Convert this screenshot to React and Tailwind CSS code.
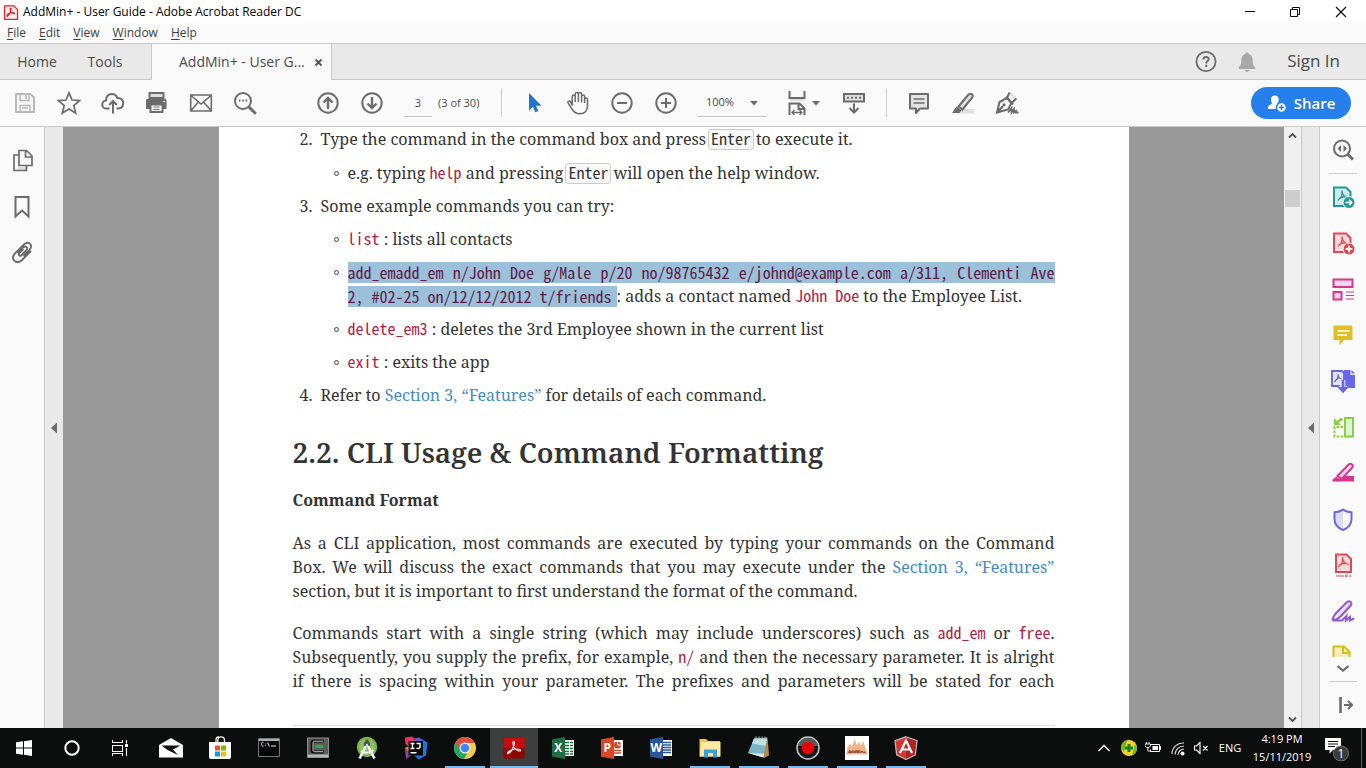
import React from "react";

const ui = "font-['Open_Sans','Noto_Sans',sans-serif]";

function Svg({ s = 28, className = "", children, ...rest }) {
  return (
    <svg width={s} height={s} viewBox={`0 0 ${s} ${s}`} fill="none" aria-hidden="true" className={`shrink-0 ${className}`} {...rest}>
      {children}
    </svg>
  );
}

function ToolButton({ label, children }) {
  return (
    <button type="button" aria-label={label} className="flex h-11 w-11 shrink-0 items-center justify-center text-[#6b6b6b]">
      {children}
    </button>
  );
}

const line = { stroke: "currentColor", strokeWidth: 2 };

/* ---------- window chrome ---------- */

function TitleBar() {
  return (
    <header className={`flex h-[23px] shrink-0 items-center bg-white text-xs text-black ${ui}`}>
      <Svg s={16} className="ml-[3px]">
        <path d="M1.5 1.800h9.200l3.800 3.600v10.100h-13z" fill="#fdecec" stroke="#e02424" strokeWidth="1.300" strokeLinejoin="round" />
        <path d="M4 11.500c.5-1.600 3.500-3.200 6.500-2.800 1.800.3 1.400 1.500-.2.900C8 8.600 7 6.500 7.200 4.800c.2-1 1.200-.6.9.5C7.700 8 6 11 4.600 12.200c-.6.4-.8 0-.6-.7z" stroke="#e02424" strokeWidth="1.100" />
      </Svg>
      <h1 className="ml-1 truncate">AddMin+ - User Guide - Adobe Acrobat Reader DC</h1>
      <div className="mr-[2px] ml-auto flex">
        <button type="button" aria-label="Minimize" className="flex h-[22px] w-[46px] items-center justify-center">
          <Svg s={12}><path d="M2 5.500h10" stroke="#000" /></Svg>
        </button>
        <button type="button" aria-label="Restore" className="flex h-[22px] w-[46px] items-center justify-center">
          <Svg s={12}><path d="M1.500 3.500h7v7h-7zM3.500 3.500v-2h7v7h-2" stroke="#000" /></Svg>
        </button>
        <button type="button" aria-label="Close" className="flex h-[22px] w-[46px] items-center justify-center">
          <Svg s={12}><path d="M1 1l10 10M11 1L1 11" stroke="#000" strokeWidth="1.100" /></Svg>
        </button>
      </div>
    </header>
  );
}

function MenuBar() {
  const items = ["File", "Edit", "View", "Window", "Help"];
  return (
    <nav className={`flex h-5 shrink-0 items-center gap-[13px] bg-[#fafafa] pl-[7px] text-xs text-[#3f3f3f] ${ui}`}>
      {items.map((m) => (
        <button type="button" key={m}>
          <span className="underline underline-offset-2">{m[0]}</span>
          {m.slice(1)}
        </button>
      ))}
    </nav>
  );
}

function TabBar() {
  return (
    <div className={`flex h-[37px] shrink-0 border-y border-[#c8c8c8] bg-[#e9e9e9] text-sm text-[#4b4b4b] ${ui}`}>
      <button type="button" className="w-[74px] text-center">Home</button>
      <button type="button" className="w-[62px] text-center">Tools</button>
      <div className="-mb-px ml-[15px] flex w-[181px] items-center border-x border-[#c8c8c8] bg-[#fafafa] pl-[27px]">
        <button type="button" className="whitespace-nowrap">AddMin+ - User G...</button>
        <button type="button" aria-label="Close tab" className="mr-[8px] ml-auto">
          <Svg s={9}><path d="M1.500 1.500l6 6M7.500 1.500l-6 6" stroke="#555" strokeWidth="1.900" /></Svg>
        </button>
      </div>
      <div className="ml-auto flex items-center pr-[26px]">
        <button type="button" aria-label="Help">
          <Svg s={24}>
            <circle cx="12" cy="11.500" r="9.600" stroke="#6b6b6b" strokeWidth="1.800" />
            <path d="M9.400 9.500c0-3.400 5.300-3.200 5.300-.3 0 1.900-2.500 1.900-2.500 4.200M12.200 14.800v2.200" stroke="#6b6b6b" strokeWidth="2" />
          </Svg>
        </button>
        <button type="button" aria-label="Notifications" className="ml-[19px]">
          <Svg s={20}>
            <path d="M10 0.500c1 0 1.600.7 1.600 1.600 2.600.7 4 2.700 4 5.400 0 4 .8 6.500 2.700 8v1.500H1.700v-1.500c1.900-1.500 2.700-4 2.700-8 0-2.700 1.400-4.700 4-5.400 0-.9.6-1.600 1.600-1.600zM7.500 18h5c-.3 1.200-1.200 1.800-2.500 1.800S7.800 19.200 7.500 18z" fill="#a8a8a8" />
          </Svg>
        </button>
        <button type="button" className="ml-[30px] text-[17px] font-medium">Sign In</button>
      </div>
    </div>
  );
}

function Toolbar() {
  return (
    <div className={`flex h-[47px] shrink-0 items-center border-b border-[#c8c8c8] bg-[#fafafa] pl-[3px] text-xs text-[#4b4b4b] ${ui}`}>
      <ToolButton label="Save">
        <Svg s={24} className="text-[#b9b9b9]">
          <path d="M3 3h14.500L21 6.500V21H3z" fill="#f5f5f5" {...line} />
          <path d="M7 3v6.500h9V3M13 4v4M7 21v-6.500h10V21M9 17h6" stroke="currentColor" strokeWidth="1.500" />
        </Svg>
      </ToolButton>
      <ToolButton label="Star">
        <Svg s={24}><path d="M12 1.800l3 7.200 7.700.6-5.900 5 1.900 7.500L12 18l-6.700 4.100 1.900-7.500-5.900-5L9 9z" stroke="currentColor" strokeWidth="1.700" /></Svg>
      </ToolButton>
      <ToolButton label="Upload to cloud">
        <Svg s={24}>
          <path d="M8.500 17.500H5.600A4 4 0 0 1 5 9.400C4.800 5.500 7.500 3 10.800 3c2.800 0 4.800 1.500 5.600 4.100 3.500-.3 5.800 1.900 5.800 5 0 3.200-2 5.400-5.100 5.400h-1.600" {...line} />
          <path d="M12 22.500v-12M8.200 14L12 10l3.800 4" {...line} />
        </Svg>
      </ToolButton>
      <ToolButton label="Print">
        <Svg s={24}>
          <path d="M4.500 2h14v5h-14z" fill="#dedede" {...line} />
          <path d="M2.500 8h17.500c.9 0 1.500.6 1.500 1.500V18h-4v-3h-12v3h-4.500V9.500C1 8.600 1.600 8 2.500 8z" fill="currentColor" />
          <path d="M5.500 13.500h12V21h-12z" fill="#fafafa" {...line} />
          <path d="M8.500 16h6M8.500 18.500h6" stroke="currentColor" strokeWidth="1.200" />
          <path d="M18 10.500h2" stroke="#fff" />
        </Svg>
      </ToolButton>
      <ToolButton label="Email">
        <Svg s={24}><path d="M1.700 4h20.600v16H1.700zM2 4.500l10 8.500 10-8.500M2 19.500l7.500-8.500M22 19.500L14.500 11" stroke="currentColor" strokeWidth="1.600" /></Svg>
      </ToolButton>
      <ToolButton label="Find">
        <Svg s={24}>
          <circle cx="10" cy="10" r="8" {...line} />
          <path d="M15.500 15.500l7.300 7.300" stroke="currentColor" strokeWidth="3" />
          <path d="M5.800 9.500h1.700M9.200 9.500h1.700M12.500 9.500h1.700" {...line} />
        </Svg>
      </ToolButton>
      <div className="w-[39px]" />
      <ToolButton label="Previous page">
        <Svg s={24}><circle cx="12" cy="12" r="9.700" {...line} /><path d="M12 18V7M7.500 11.500L12 7l4.500 4.500" {...line} strokeWidth="2.400" /></Svg>
      </ToolButton>
      <ToolButton label="Next page">
        <Svg s={24}><circle cx="12" cy="12" r="9.700" {...line} /><path d="M12 6v11M7.500 12.500L12 17l4.500-4.500" {...line} strokeWidth="2.400" /></Svg>
      </ToolButton>
      <input aria-label="Page number" defaultValue="3" className="ml-[10px] h-7 w-7 shrink-0 border-b border-[#c0c0c0] bg-transparent text-center text-[11px]" />
      <span className="ml-[6px] w-[63px] shrink-0 text-[11px] whitespace-nowrap">(3 of 30)</span>
      <div className="h-7 w-px shrink-0 bg-[#cbcbcb]" />
      <div className="w-[10px]" />
      <ToolButton label="Select">
        <Svg s={24}><path d="M7 2v17.500l4-3.800 2.300 5.600 3-1.300-2.300-5.300h5.500z" fill="#2074cc" /></Svg>
      </ToolButton>
      <ToolButton label="Pan">
        <Svg s={24}>
          <path d="M6.200 14.500V5.700c0-2.200 3-2.200 3 0V11V3.200c0-2.300 3.200-2.300 3.200 0V11V3.200c0-2.200 3.200-2.200 3.200 0V11.500V5.600c0-2.100 3-2.100 3 0V12V8.500c0-1.900 2.900-1.900 2.900 0v6c0 5-2.500 8.300-7.600 8.300-4 0-5.800-1.300-7.700-4.300l-4-6.400c-1-1.800 1.200-2.800 2.400-1.400z" stroke="currentColor" strokeWidth="1.500" />
        </Svg>
      </ToolButton>
      <ToolButton label="Zoom out">
        <Svg s={24}><circle cx="12" cy="12" r="9.700" {...line} /><path d="M7 12h10" {...line} /></Svg>
      </ToolButton>
      <ToolButton label="Zoom in">
        <Svg s={24}><circle cx="12" cy="12" r="9.700" {...line} /><path d="M7 12h10M12 7v10" {...line} /></Svg>
      </ToolButton>
      <div className="ml-[10px] flex h-7 w-[68px] shrink-0 items-center border-b border-[#c0c0c0]">
        <select aria-label="Zoom level" className="w-full appearance-none bg-transparent pl-2 text-[11px]">
          <option>100%</option>
        </select>
        <Svg s={8} className="mr-2"><path d="M0 2h8L4 6.500z" fill="#6b6b6b" /></Svg>
      </div>
      <button type="button" aria-label="Fit page" className="ml-[19px] flex shrink-0 items-center gap-[3px] text-[#6b6b6b]">
        <Svg s={24}>
          <path d="M4.500 0v7h15V0" {...line} />
          <path d="M5 8h14v2H5z" fill="#dedede" />
          <path d="M4.500 24V12.500h10l5 5V24M13.500 12.500V18h6" {...line} />
          <path d="M7 21.500h10M9.500 19L7 21.500 9.500 24M14.500 19l2.500 2.500-2.500 2.500" stroke="currentColor" strokeWidth="1.300" />
        </Svg>
        <Svg s={8}><path d="M0 2h8L4 6.500z" fill="#6b6b6b" /></Svg>
      </button>
      <div className="w-[12px]" />
      <ToolButton label="Page display">
        <Svg s={24}>
          <path d="M2 3h20v7.500H2z" fill="#dedede" {...line} />
          <path d="M5 6.700h14" {...line} strokeDasharray="2 2" />
          <path d="M12 12.500v9M7.500 17L12 21.500l4.500-4.500" {...line} />
        </Svg>
      </ToolButton>
      <div className="ml-[10px] h-7 w-px shrink-0 bg-[#cbcbcb]" />
      <div className="w-[10px]" />
      <ToolButton label="Comment">
        <Svg s={24}>
          <path d="M3 3h18v14.500h-8L9 22v-4.500H3z" fill="#e3e3e3" {...line} strokeLinejoin="round" />
          <path d="M6.500 8h11M6.500 12h11" stroke="currentColor" strokeWidth="1.500" />
        </Svg>
      </ToolButton>
      <ToolButton label="Highlight">
        <Svg s={24}>
          <path d="M8 18h15v4.500H5z" fill="#dedede" />
          <path d="M7.500 15.500L17.500 3.500c2.500-2 5.300.3 3.700 3L11.500 18.500z" fill="#e3e3e3" {...line} />
          <path d="M5.500 15.500l5 4-2 2.500H1z" fill="currentColor" />
        </Svg>
      </ToolButton>
      <ToolButton label="Sign">
        <Svg s={24}>
          <path d="M14 2l2-1 5.500 5.500-2.500 2.500z" fill="#dedede" />
          <path d="M2 21.500L4.500 11 12 7l4.500 5L13 18.500zM2.500 21L8 15" {...line} strokeWidth="2" />
          <path d="M12 7l2.500-5.500M16.500 12l5-4.500M11 5.500l7 8" {...line} />
          <circle cx="9" cy="13.800" r="1.500" fill="currentColor" />
          <path d="M13 21.500l3.500-4.500v4.500l2.500-3.500v3.500l2-1.500v1.500h2.500" stroke="currentColor" strokeWidth="1.800" />
        </Svg>
      </ToolButton>
      <button type="button" className="mr-[15px] ml-auto flex h-8 w-[100px] shrink-0 items-center justify-center gap-[7px] rounded-full bg-[#2680eb] text-[15px] font-semibold text-white">
        <Svg s={20}>
          <path d="M7.800 2.500c2.400 0 3.900 1.500 3.900 4 0 2-.7 3-1.500 4 0 2.200 3.800 1.500 4.800 3.500v2H1c0-3.500 1-4 4.300-5.500C4.500 9.500 4 8.500 4 6.500c0-2.500 1.500-4 3.800-4z" fill="#fff" />
          <circle cx="14.500" cy="14.500" r="5" fill="#fff" stroke="#2680eb" strokeWidth="1.500" />
          <path d="M14.500 12v5M12 14.500h5" stroke="#2680eb" strokeWidth="1.500" />
        </Svg>
        Share
      </button>
    </div>
  );
}

/* ---------- document ---------- */

const mono = "font-['M+_1mn','Noto_Sans_Mono_CJK_JP','Noto_Sans_Mono_CJK_SC','Liberation_Mono',monospace] text-base";

function Code({ children }) {
  return <code className={`leading-none text-[#b12146] ${mono}`}>{children}</code>;
}

function Kbd({ children }) {
  return (
    <kbd className={`mx-[2px] mt-[2px] inline-block h-[21px] rounded-[3px] border border-[#ccc] bg-[#f7f7f7] px-[2px] align-top leading-4 text-[#333] ${mono}`}>
      {children}
    </kbd>
  );
}

function Item({ n, children }) {
  return (
    <li>
      <div className="flex">
        <span className="w-7 shrink-0 pl-[7px]">{n}.</span>
        <div className="whitespace-nowrap">{children}</div>
      </div>
    </li>
  );
}

function Sub({ children }) {
  return (
    <li className="flex">
      <span className="flex h-6 w-[14px] shrink-0 items-center pt-px">
        <span className="h-[5px] w-[5px] rounded-full border border-[#444]" />
      </span>
      <div className="flex-1 whitespace-nowrap">{children}</div>
    </li>
  );
}

function Full({ children }) {
  return <span className="block whitespace-nowrap text-justify [text-align-last:justify]">{children}</span>;
}

function DocLink() {
  return <a href="#features" className="text-[#428bca]">Section 3, “Features”</a>;
}

function Page() {
  return (
    <article className="h-full w-[910px] shrink-0 overflow-hidden bg-white px-[74px] font-['Noto_Serif','DejaVu_Serif_Condensed','DejaVu_Serif',serif] text-base leading-6 text-[#333]">
      <ol className="flex flex-col gap-[9px]">
        <Item n={2}>Type the command in the command box and press<Kbd>Enter</Kbd>to execute it.</Item>
        <li className="mt-px pl-[41px]">
          <ul>
            <Sub>e.g. typing <Code>help</Code> and pressing<Kbd>Enter</Kbd>will open the help window.</Sub>
          </ul>
        </li>
        <Item n={3}>Some example commands you can try:</Item>
        <li className="pl-[41px]">
          <ul className="flex flex-col gap-[9px]">
            <Sub><Code>list</Code> : lists all contacts</Sub>
            <Sub>
              <code className={`flex h-6 items-center text-[#5f1a45] ${mono}`}>
                <span className="block w-full bg-[#9bc0da] leading-[21px] [text-align-last:justify]">
                  add_emadd_em n/John Doe g/Male p/20 no/98765432 e/johnd@example.com a/311, Clementi Ave
                </span>
              </code>
              <div className="flex h-6 items-center">
                <code className={`shrink-0 bg-[#9bc0da] pr-[5px] leading-[21px] text-[#5f1a45] ${mono}`}>
                  2, #02-25 on/12/12/2012 t/friends
                </code>
                <span>: adds a contact named <Code>John Doe</Code> to the Employee List.</span>
              </div>
            </Sub>
            <Sub><Code>delete_em3</Code> : deletes the 3rd Employee shown in the current list</Sub>
            <Sub><Code>exit</Code> : exits the app</Sub>
          </ul>
        </li>
        <Item n={4}>Refer to <DocLink /> for details of each command.</Item>
      </ol>
      <h2 className="mt-[25px] text-[28px] leading-10 font-semibold whitespace-nowrap">2.2. CLI Usage &amp; Command Formatting</h2>
      <h3 className="mt-4 text-base leading-6 font-bold">Command Format</h3>
      <p className="mt-[19px]">
        <Full>As a CLI application, most commands are executed by typing your commands on the Command</Full>
        <Full>Box. We will discuss the exact commands that you may execute under the <DocLink /></Full>
        <span className="block">section, but it is important to first understand the format of the command.</span>
      </p>
      <p className="mt-[18px]">
        <Full>Commands start with a single string (which may include underscores) such as <Code>add_em</Code> or <Code>free</Code>.</Full>
        <Full>Subsequently, you supply the prefix, for example, <Code>n/</Code> and then the necessary parameter. It is alright</Full>
        <Full>if there is spacing within your parameter. The prefixes and parameters will be stated for each</Full>
      </p>
      <hr className="mt-8 border-t border-[#ddd]" />
    </article>
  );
}

/* ---------- side panes ---------- */

function LeftRail() {
  return (
    <aside className="flex w-[45px] shrink-0 flex-col items-center border-r border-[#c8c8c8] bg-[#fafafa] pt-[11px] pl-[2px] text-[#6b6b6b]">
      <button type="button" aria-label="Page thumbnails" className="flex h-[46px] w-10 items-center justify-center">
        <Svg s={24}>
          <path d="M7 18h8v3H7z" fill="#dedede" />
          <path d="M8 1.500h7.500l5.500 5.500V16.500H8zM14.500 1.500v6.500H21M8 6H3v15.500h12.500v-5" stroke="currentColor" strokeWidth="1.700" />
        </Svg>
      </button>
      <button type="button" aria-label="Bookmarks" className="flex h-[46px] w-10 items-center justify-center">
        <Svg s={24}><path d="M4.500 2h13v19.500l-6.500-6-6.500 6z" {...line} /></Svg>
      </button>
      <button type="button" aria-label="Attachments" className="flex h-[46px] w-10 items-center justify-center">
        <Svg s={24}>
          <path d="M7 12.500l5.700-5.700c2.400-2.200 5.300.5 3.200 2.900l-5 5c-1.800 1.600-3.500-.3-2-2l4-4M20.500 10.500l-9 9c-5.800 5.300-12-.8-7-6.600l9-9c4.800-4 9.500.7 5.500 5.400l-6 6.200" stroke="currentColor" strokeWidth="1.900" transform="translate(-.5 -.5)" />
        </Svg>
      </button>
    </aside>
  );
}

function Collapse({ label, className }) {
  return (
    <button type="button" aria-label={label} className={`flex shrink-0 items-center justify-center bg-[#e9e9e9] ${className}`}>
      <Svg s={12}><path d="M9 0.500v11L3 6z" fill="#6b6b6b" /></Svg>
    </button>
  );
}

const acro = "M9 17.500c1-2 2.500-3 4.500-4.300M13 7.500c.3 3 .7 5 3.500 6.500l3 1M13 7.500v3c0 2-.8 3.500-1.500 5M10 15.500c2.500-1.500 5-1.800 7-1.500";

const tools = [
  ["Export PDF", (
    <>
      <path d="M5 4.500h12l4.500 4.500v14H5z" fill="#d3e9e9" stroke="#1f9a9a" strokeWidth="2" />
      <path d={acro} stroke="#1f9a9a" strokeWidth="1.300" />
      <circle cx="20" cy="19.500" r="6" fill="#1f9a9a" stroke="#fafafa" />
      <path d="M16.500 19.500h6M20 16.800l2.700 2.700-2.700 2.700" stroke="#fff" strokeWidth="1.600" />
    </>
  )],
  ["Create PDF", (
    <>
      <path d="M5 4.500h12l4.500 4.500v14H5z" fill="#fadadd" stroke="#e34850" strokeWidth="2" />
      <path d={acro} stroke="#e34850" strokeWidth="1.300" />
      <circle cx="20" cy="20" r="6" fill="#e34850" stroke="#fafafa" />
      <path d="M16.700 20h6.600M20 16.700v6.600" stroke="#fff" strokeWidth="2" />
    </>
  )],
  ["Organize pages", (
    <>
      <path d="M4.500 4.500h19V12h-19zM4.500 17h8v7.500h-8z" fill="#f5d3e8" stroke="#d83790" strokeWidth="2" />
      <path d="M17 17h8M17 20.500h8M17 24h8" stroke="#d83790" strokeWidth="1.200" />
    </>
  )],
  ["Comment", (
    <>
      <path d="M6 4.500h16c1 0 1.500.5 1.500 1.500v13H15l-4.500 5.500V19h-6V6c0-1 .5-1.500 1.500-1.500z" fill="#dfbf24" />
      <path d="M8.500 10h12M8.500 14h9.500" stroke="#fff" strokeWidth="1.700" />
    </>
  )],
  ["Combine files", (
    <>
      <path d="M15 3h6.500v5H26v13H15z" fill="#6767ec" />
      <path d="M22.500 3L26 6.500h-3.500z" fill="#6767ec" />
      <path d="M11 19H3V4h10l2 2v7" fill="#e4e4fb" stroke="#6767ec" strokeWidth="1.900" />
      <path d="M5.500 15c1-2 2.500-3 4-4M9 7c0 3 1 4 3.500 5M9 7c.3 2-1 5-2 6.500" stroke="#6767ec" strokeWidth="1.200" />
      <path d="M14 13v11M9 20.500l5 5 5-5" stroke="#fafafa" strokeWidth="4.500" />
      <path d="M14 13v11" stroke="#6767ec" strokeWidth="2.800" />
      <path d="M8.300 20h11.400L14 26.300z" fill="#6767ec" />
    </>
  )],
  ["Compare files", (
    <>
      <path d="M16 5h8v18.500h-8z" fill="#e0f3d3" stroke="#87cf45" strokeWidth="2" />
      <path d="M14 14H5.500v9.500H14" stroke="#87cf45" strokeWidth="2" strokeDasharray="2.500 1.500" />
      <path d="M5 5v7h7l-2.300-2.300L14 6.500 12 4.500 8 8z" fill="#87cf45" />
    </>
  )],
  ["Redact", (
    <>
      <path d="M14 17h11v5.500H8z" fill="#d83790" />
      <path d="M8.500 17L19.500 5.500c2.500-2 5.500.7 3.700 3.200L12.500 20z" fill="#f5d3e8" stroke="#d83790" strokeWidth="2" />
      <path d="M7.500 17.500l4 3.500-2 1.500H3.500v-2z" fill="#d83790" />
    </>
  )],
  ["Protect", (
    <>
      <path d="M14 4.500c-2.500 2-5 2.700-8.500 2.700V14c0 5.500 3.500 9 8.500 11z" fill="#dcdcfa" />
      <path d="M14 4.500c2.500 2 5 2.700 8.500 2.700V14c0 5.500-3.500 9-8.500 11-5-2-8.500-5.500-8.500-11V7.200C9 7.200 11.500 6.500 14 4.500z" stroke="#6767ec" strokeWidth="2" />
    </>
  )],
  ["Optimize PDF", (
    <>
      <path d="M7 3.500h10.500l4.500 4.500v13H7z" fill="#fadadd" stroke="#e34850" strokeWidth="2" />
      <path d={acro} stroke="#e34850" strokeWidth="1.300" transform="translate(.5 -1.500)" />
      <path d="M7 25h8M19.500 25h3" stroke="#e34850" />
      <circle cx="17.200" cy="25" r="1" stroke="#e34850" />
    </>
  )],
  ["Fill and sign", (
    <>
      <path d="M7 17L18.500 5c2.500-2 5.500.8 3.700 3.200L11 20z" fill="#e8dbf8" />
      <path d="M3.500 23.500C4 19.500 5.500 17.500 8 15L18 5c2.700-2 5.700.8 3.700 3.500L12 19c-3 3-5 4-8.500 4.500h9.500l4.500-4.500-.5 4.500 4-3.500v3.500l4-2" stroke="#9256d9" strokeWidth="2" />
    </>
  )],
];

function RightRail() {
  return (
    <aside className="flex w-[47px] shrink-0 flex-col items-center overflow-hidden border-l border-[#c8c8c8] bg-[#fafafa]">
      <button type="button" aria-label="Search tools" className="flex h-[46px] w-11 shrink-0 items-center justify-center">
        <Svg>
          <circle cx="13" cy="12.500" r="8" stroke="#6b6b6b" strokeWidth="2" />
          <path d="M18.500 18l5.500 5.500" stroke="#6b6b6b" strokeWidth="3" />
          <path d="M12 9v7l-3.500-3.500zM14.500 9v7l3.500-3.500z" fill="#6b6b6b" />
        </Svg>
      </button>
      <div className="h-px w-7 shrink-0 bg-[#cbcbcb]" />
      <div className="min-h-0 flex-1 overflow-hidden">
        {tools.map(([label, art]) => (
          <button type="button" key={label} aria-label={label} className="flex h-[46px] w-11 items-center justify-center">
            <Svg>{art}</Svg>
          </button>
        ))}
        <button type="button" aria-label="Stamp" className="flex h-[46px] w-11 items-center justify-center">
          <Svg>
            <path d="M4.500 22V3.500H15l5.500 5.500V22z" fill="#f4edc5" stroke="#d9be14" strokeWidth="2" />
            <path d="M14 3.500V10h6.500" stroke="#d9be14" strokeWidth="2" />
          </Svg>
        </button>
      </div>
      <button type="button" aria-label="More tools" className="flex h-6 w-11 shrink-0 items-center justify-center">
        <Svg s={14}><path d="M1.500 4l5.500 4.500L12.500 4" stroke="#6b6b6b" strokeWidth="2.200" /></Svg>
      </button>
      <div className="h-px w-7 shrink-0 bg-[#cbcbcb]" />
      <button type="button" aria-label="Expand pane" className="flex h-[46px] w-11 shrink-0 items-center justify-center">
        <Svg s={20}><path d="M7.500 2v16" stroke="#6b6b6b" strokeWidth="2.600" /><path d="M11 10h8M15 6l4 4-4 4" stroke="#6b6b6b" strokeWidth="2" /></Svg>
      </button>
    </aside>
  );
}

function ScrollBar() {
  return (
    <div className="flex w-[18px] shrink-0 flex-col items-center border-r border-[#c8c8c8] bg-[#f0f0f0]">
      <button type="button" aria-label="Scroll up" className="flex h-[17px] items-center">
        <Svg s={9}><path d="M1 6.500L4.500 3 8 6.500" stroke="#505050" strokeWidth="1.800" /></Svg>
      </button>
      <div className="mt-[46px] h-[17px] w-[15px] bg-[#cdcdcd]" />
      <button type="button" aria-label="Scroll down" className="mt-auto flex h-[17px] items-center">
        <Svg s={9}><path d="M1 2.500L4.500 6 8 2.500" stroke="#505050" strokeWidth="1.800" /></Svg>
      </button>
    </div>
  );
}

/* ---------- taskbar ---------- */

function Office({ letter, color, dark, children }) {
  return (
    <Svg s={24}>
      <path d="M11 4h12v16H11z" fill="#fff" />
      {children}
      <path d="M1 3.500L14 1v22L1 20.500z" fill={dark} />
      <path d="M1 3.500L14 1v22L1 20.500z" fill={color} opacity=".75" />
      <text x="7.300" y="16.200" textAnchor="middle" fontSize="12" fontWeight="700" fontFamily="Open Sans, sans-serif" fill="#fff">{letter}</text>
    </Svg>
  );
}

const apps = [
  ["Mail", 0, (
    <Svg s={24}>
      <path d="M0 9L12 2l12 7v12.500H0z" fill="#fff" />
      <path d="M2.500 9.500H21.500L14 13.500l5 5.500-10.500-5z" fill="#0c0e0e" />
    </Svg>
  )],
  ["Microsoft Store", 0, (
    <Svg s={24}>
      <path d="M8 7V3.500C8 1.500 9.500.8 11 .8M16.500 7V4c0-2-1.500-3.200-3.500-3.200S9.800 2 9.800 4v2" stroke="#eee" strokeWidth="1.300" />
      <path d="M1 6h22v15c0 1.300-.7 2-2 2H3c-1.300 0-2-.7-2-2z" fill="#fff" />
      <path d="M7 9.500h5v5H7z" fill="#f25022" /><path d="M13 9.500h5v5h-5z" fill="#7fba00" />
      <path d="M7 15.500h5v5H7z" fill="#00a4ef" /><path d="M13 15.500h5v5h-5z" fill="#ffb900" />
    </Svg>
  )],
  ["Command Prompt", 0, (
    <Svg s={24}>
      <path d="M1.500 2.500h21v18h-21z" fill="#050505" stroke="#777" />
      <path d="M2 3h20v2H2z" fill="#aab0b5" />
      <path d="M6.500 6.500C3.800 6 3.800 10.500 6.500 10M8.500 7.500v.8M8.500 9.300v.8M10.500 6.500l2 4M14 10h5" stroke="#eee" strokeWidth="1" />
    </Svg>
  )],
  ["Terminal", 0, (
    <Svg s={24}>
      <path d="M1.500 2h21v19.500h-21z" fill="#5a5d5c" stroke="#8d9190" />
      <path d="M2 18.500h20V21H2z" fill="#b7baba" />
      <path d="M17.500 5H8c-1.500 0-2 .5-2 2v7c0 1.500.5 2 2 2h9.500" stroke="#111" strokeWidth="3" />
      <path d="M17 5.200H8.500c-1 0-1.500.5-1.500 1.500v7.500c0 1 .5 1.500 1.500 1.500H17" stroke="#cfd3d2" strokeWidth=".9" />
      <path d="M9.500 10.500h7.500" stroke="#27b53c" strokeWidth="3" />
    </Svg>
  )],
  ["Android Studio", 0, (
    <Svg s={24}>
      <circle cx="12" cy="11" r="10.200" fill="#7fb24d" />
      <circle cx="12" cy="11" r="8" fill="#8fc05f" />
      <path d="M12 3.500v4" stroke="#555" strokeWidth="3" />
      <circle cx="12" cy="8.500" r="3.200" fill="#4d5358" />
      <path d="M11 10L4.500 22.500M13 10l6.500 12.500" stroke="#f2f2f2" strokeWidth="2.600" />
      <path d="M6 15c4 2.500 8.500 2.300 12.500-1" stroke="#f2f2f2" strokeWidth="2" />
      <circle cx="12" cy="9" r="1.200" fill="#ddd" />
    </Svg>
  )],
  ["IntelliJ IDEA", 0, (
    <Svg s={24}>
      <path d="M1 1.500L8 .5l5 4L8 13 1.500 8z" fill="#f52f62" />
      <path d="M1 12l6-3 5 7-10 7z" fill="#8b4a9e" />
      <path d="M1 12l5-2v6z" fill="#fc801d" />
      <path d="M15 1.500l8.500 5-1.500 13-7.500 4-4-4z" fill="#1f74e8" />
      <path d="M9 3l6-1.500 4 5-8 3z" fill="#6d59c9" />
      <path d="M4.500 5h14.500v14.500H4.500z" fill="#0a0a0a" />
      <path d="M6.500 7.500h4M8.500 7.500v5M6.500 12.500h4M12.500 7.500h3.500v3.500c0 1.500-2 2-3.500 1M6.500 16.800h6" stroke="#fff" strokeWidth="1.400" />
    </Svg>
  )],
  ["Google Chrome", 1, (
    <Svg s={24}>
      <circle cx="12" cy="12" r="11" fill="#fccb45" />
      <path d="M12 12L2.500 6.500A11 11 0 0 0 11 23l5-8.500z" fill="#23a566" />
      <path d="M2.500 6.500A11 11 0 0 1 21.800 7H12l-4.500 7.500z" fill="#dc5044" />
      <circle cx="12" cy="12" r="5.500" fill="#f4f4f4" /><circle cx="12" cy="12" r="4.300" fill="#4286f4" />
    </Svg>
  )],
  ["Adobe Acrobat Reader", 2, (
    <Svg s={24}>
      <path d="M1.500 1.500h21v21h-21z" fill="#8e0606" /><path d="M1.500 1.500h21V12h-21z" fill="#c50b0b" />
      <path d="M5.500 17c.8-2 5.500-4.200 10.500-4 3.500.2 3.500 2.500.7 1.800-3-.8-5.500-4-5.800-7.500-.2-2.700 2-2.700 1.500 0-.6 3.500-2.500 7.300-4.700 9.500-1.500 1.400-2.600 1-2.200.2z" stroke="#f7dede" strokeWidth="1.200" />
    </Svg>
  )],
  ["Excel", 0, (
    <Office letter="X" color="#217346" dark="#185c37">
      <path d="M14 6.500h4M19 6.500h3M14 9.500h4M19 9.500h3M14 12.500h4M19 12.500h3M14 15.500h4M19 15.500h3M14 18h4M19 18h3" stroke="#217346" strokeWidth="1.500" />
    </Office>
  )],
  ["PowerPoint", 0, (
    <Office letter="P" color="#e04e2b" dark="#c43e1c">
      <circle cx="17.500" cy="9" r="3.500" fill="#d24726" /><path d="M17.500 9V5M17.500 9h4" stroke="#fff" />
      <path d="M14 14.500h7M14 17h7" stroke="#d24726" strokeWidth="1.400" />
    </Office>
  )],
  ["Word", 0, (
    <Office letter="W" color="#2b579a" dark="#2a5295">
      <path d="M14 6.500h8M14 9h8M14 11.500h8M14 14h8M14 16.500h8" stroke="#2b579a" strokeWidth="1.300" />
    </Office>
  )],
  ["File Explorer", 1, (
    <Svg s={24}>
      <path d="M1.500 3h6.500l2 2h12v15.500h-20.500z" fill="#f5c84b" />
      <path d="M3 6h19.500v14.500H2z" fill="#ffe9a2" />
      <path d="M6 21.500v-8h13v8h-4V17h-5v4.500z" fill="#3aa0dc" />
    </Svg>
  )],
  ["Notepad", 1, (
    <Svg s={24}>
      <path d="M8 2.500l12.500-1 1.500 18-5 2.500z" fill="#b88a43" />
      <path d="M7 2.500h13l-3.500 19L1 17z" fill="#7cb5c4" />
      <path d="M7 2.500h13L18.500 10 5 7.500z" fill="#bfe0e6" />
      <path d="M1 17l15.500 4.500.7-3.800z" fill="#d7edf0" />
      <path d="M9 2v-1.500M12 2v-1.500M15 2v-1.500M18 2v-1.500" stroke="#ccc" />
    </Svg>
  )],
  ["Recorder", 1, (
    <Svg s={24}>
      <circle cx="12" cy="12" r="11" fill="#1a1a1a" stroke="#c9c9c9" strokeWidth="1.500" />
      <path d="M2 10C3 4.500 8 2 12 2s9 2.500 10 8z" fill="#5b5b5b" />
      <circle cx="12" cy="12" r="6.200" fill="#e80505" />
    </Svg>
  )],
  ["AddMin+", 1, (
    <Svg s={24}>
      <path d="M0 0h24v24H0z" fill="#fff" />
      <path d="M1 18.500L2.500 11l2.500-3 2 2.500L9.500 3 12 9l2-3 2 3.500L18 5l2.500 7 2.500 6.500z" fill="#f3b58c" />
      <text x="12" y="16.500" textAnchor="middle" fontSize="4" fontWeight="700" fontFamily="Open Sans, sans-serif" fill="#4a2a1a">AddMin+</text>
    </Svg>
  )],
  ["Angular", 1, (
    <Svg s={24}>
      <path d="M12 .8l11 3.800-1.700 14.200L12 23.500l-9.300-4.700L1 4.600z" fill="#d7342f" stroke="#b8b8b8" strokeWidth="1.300" />
      <path d="M12 1.500l10.300 3.600-1.500 13.200L12 22.800z" fill="#b02323" />
      <path d="M6 17L12 4.500 18 17M8.500 13.500h7" stroke="#fff" strokeWidth="2.200" />
    </Svg>
  )],
];

function TaskBar() {
  return (
    <footer className={`flex h-10 shrink-0 items-stretch bg-[#0c0e0e] text-xs text-white ${ui}`}>
      <button type="button" aria-label="Start" className="flex w-12 shrink-0 items-center justify-center">
        <Svg s={16}><path d="M0 2.300L7 1.300v6.200H0zM8 1.200L16 0v7.500H8zM0 8.500h7v6.200l-7-1zM8 8.500h8V16l-8-1.200z" fill="#fff" /></Svg>
      </button>
      <button type="button" aria-label="Cortana" className="flex w-12 shrink-0 items-center justify-center">
        <Svg s={16}><circle cx="8" cy="8" r="6.700" stroke="#fff" strokeWidth="2" /></Svg>
      </button>
      <button type="button" aria-label="Task view" className="flex w-12 shrink-0 items-center justify-center">
        <Svg s={16}><path d="M.5 0v2.500h10V0M.5 5.500h10v6H.5zM.5 16v-2.500h10V16M14.500 0v3.500M14.500 8v8" stroke="#fff" strokeWidth="1.100" /><path d="M13 4h3v3h-3z" fill="#fff" /></Svg>
      </button>
      <div className="w-[2px] shrink-0" />
      {apps.map(([label, state, art]) => (
        <button type="button" key={label} aria-label={label} className="flex w-[49px] shrink-0 flex-col items-center">
          <span className={`flex h-[38px] w-12 items-center justify-center pt-[2px] ${state === 2 ? "bg-[#3d3f3f]" : ""}`}>{art}</span>
          <span className={`h-[2px] ${state === 0 ? "w-0" : state === 1 ? "w-10 bg-[#76b9ed]" : "w-12 bg-[#76b9ed]"}`} />
        </button>
      ))}
      <div className="ml-auto flex shrink-0 items-center">
        <button type="button" aria-label="Show hidden icons">
          <Svg s={14}><path d="M1.500 10L7 4.500l5.500 5.500" stroke="#fff" strokeWidth="1.400" /></Svg>
        </button>
        <Svg s={16} className="ml-[10px]">
          <circle cx="8" cy="8" r="8" fill="#f3d42d" />
          <path d="M0 8a8 8 0 0 1 6-7.700L3 12zM16 8a8 8 0 0 1-5 7.400L14 4z" fill="#70b62c" />
          <path d="M8 4v8M4 8h8" stroke="#17852e" strokeWidth="3" />
        </Svg>
        <Svg s={16} className="ml-[8px]">
          <path d="M6 4.500h8.500v7h-9v-2M14.500 6.500h1v3h-1" stroke="#fff" /><path d="M7.500 6h5.500v4H7.500z" fill="#fff" />
          <path d="M1.500 2v2M4 2v2M0 4h5.500v2L4 7.500H1.500L0 6zM2.800 7v4h3" stroke="#fff" strokeWidth=".9" />
        </Svg>
        <Svg s={16} className="ml-[9px]">
          <path d="M2 14A11 11 0 0 1 14 3M5 14.500A9 9 0 0 1 14 6M8 15a6 6 0 0 1 6-6" stroke="#ddd" strokeWidth="1.100" />
          <circle cx="12.500" cy="13.500" r="2" fill="#fff" />
        </Svg>
        <Svg s={16} className="ml-[7px]">
          <path d="M1.500 6h2L7 2.500v11L3.500 10h-2zM10 6l4.500 4.500M14.500 6L10 10.500" stroke="#fff" strokeWidth="1.100" />
        </Svg>
        <span className="w-[42px] text-center text-[11px]">ENG</span>
        <time className="w-[62px] text-center text-[11px] leading-[18px] whitespace-nowrap">4:19 PM<br />15/11/2019</time>
        <button type="button" aria-label="Notifications, 1 new" className="ml-[11px]">
          <Svg s={26}>
            <path d="M1 3h16v12H9l-3.500 3.500V15H1z" fill="#fff" />
            <path d="M4 6.500h10M4 9h10M4 11.500h7" stroke="#0c0e0e" />
            <circle cx="17" cy="18.500" r="7.500" fill="#3a3c3c" stroke="#777" />
            <text x="17" y="22.500" textAnchor="middle" fontSize="12" fontFamily="Open Sans, sans-serif" fill="#fff">1</text>
          </Svg>
        </button>
        <div className="mr-1 ml-[11px] h-10 w-px bg-[#5b5d5d]" />
      </div>
    </footer>
  );
}

export default function App() {
  return (
    <div className="flex h-screen flex-col overflow-hidden">
      <TitleBar />
      <MenuBar />
      <TabBar />
      <Toolbar />
      <div className="flex min-h-0 flex-1">
        <LeftRail />
        <Collapse label="Show navigation pane" className="w-[18px]" />
        <main className="flex min-w-0 flex-1 justify-center overflow-hidden bg-[#999]">
          <Page />
        </main>
        <ScrollBar />
        <Collapse label="Hide tools pane" className="w-[17px]" />
        <RightRail />
      </div>
      <TaskBar />
    </div>
  );
}
